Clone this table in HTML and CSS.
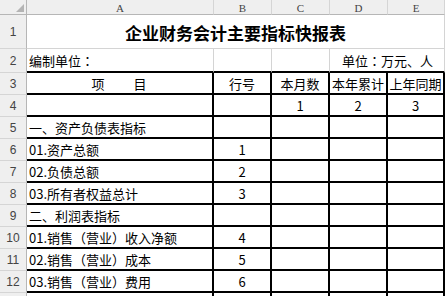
FILE: index.html
```html
<!DOCTYPE html>
<html lang="zh-CN">
<head>
<meta charset="utf-8">
<title>企业财务会计主要指标快报表</title>
<link rel="stylesheet" href="styles.css">
</head>
<body>
<div class="sheet">
  <div class="corner"><span class="tri"></span></div>
  <div class="ch">A</div>
  <div class="ch">B</div>
  <div class="ch">C</div>
  <div class="ch">D</div>
  <div class="ch">E</div>
  <div class="ch"></div>

  <div class="rh r1">1</div>
  <div class="cell title span5">企业财务会计主要指标快报表</div>
  <div class="cell"></div>

  <div class="rh">2</div>
  <div class="cell top">编制单位<span class="punc">：</span></div>
  <div class="cell top"></div>
  <div class="cell top"></div>
  <div class="cell top span2 unit">单位<span class="punc">：</span>万元、人</div>
  <div class="cell"></div>

  <div class="rh">3</div>
  <div class="cell bx ctr item">项　　目</div>
  <div class="cell bx ctr">行号</div>
  <div class="cell bx ctr">本月数</div>
  <div class="cell bx ctr">本年累计</div>
  <div class="cell bx ctr">上年同期</div>
  <div class="cell"></div>

  <div class="rh">4</div>
  <div class="cell bx"></div>
  <div class="cell bx"></div>
  <div class="cell bx ctr">1</div>
  <div class="cell bx ctr">2</div>
  <div class="cell bx ctr">3</div>
  <div class="cell"></div>

  <div class="rh">5</div>
  <div class="cell bx">一、资产负债表指标</div>
  <div class="cell bx"></div>
  <div class="cell bx"></div>
  <div class="cell bx"></div>
  <div class="cell bx"></div>
  <div class="cell"></div>

  <div class="rh">6</div>
  <div class="cell bx">01.资产总额</div>
  <div class="cell bx ctr">1</div>
  <div class="cell bx"></div>
  <div class="cell bx"></div>
  <div class="cell bx"></div>
  <div class="cell"></div>

  <div class="rh">7</div>
  <div class="cell bx">02.负债总额</div>
  <div class="cell bx ctr">2</div>
  <div class="cell bx"></div>
  <div class="cell bx"></div>
  <div class="cell bx"></div>
  <div class="cell"></div>

  <div class="rh">8</div>
  <div class="cell bx">03.所有者权益总计</div>
  <div class="cell bx ctr">3</div>
  <div class="cell bx"></div>
  <div class="cell bx"></div>
  <div class="cell bx"></div>
  <div class="cell"></div>

  <div class="rh">9</div>
  <div class="cell bx">二、利润表指标</div>
  <div class="cell bx"></div>
  <div class="cell bx"></div>
  <div class="cell bx"></div>
  <div class="cell bx"></div>
  <div class="cell"></div>

  <div class="rh">10</div>
  <div class="cell bx">01.销售（营业）收入净额</div>
  <div class="cell bx ctr">4</div>
  <div class="cell bx"></div>
  <div class="cell bx"></div>
  <div class="cell bx"></div>
  <div class="cell"></div>

  <div class="rh">11</div>
  <div class="cell bx">02.销售（营业）成本</div>
  <div class="cell bx ctr">5</div>
  <div class="cell bx"></div>
  <div class="cell bx"></div>
  <div class="cell bx"></div>
  <div class="cell"></div>

  <div class="rh">12</div>
  <div class="cell bx">03.销售（营业）费用</div>
  <div class="cell bx ctr">6</div>
  <div class="cell bx"></div>
  <div class="cell bx"></div>
  <div class="cell bx"></div>
  <div class="cell"></div>

  <div class="rh"></div>
  <div class="cell bx"></div>
  <div class="cell bx"></div>
  <div class="cell bx"></div>
  <div class="cell bx"></div>
  <div class="cell bx"></div>
  <div class="cell"></div>
</div>
</body>
</html>
```

FILE: styles.css
```css
html, body {
  margin: 0;
  padding: 0;
  background: #ffffff;
  overflow: hidden;
}

.sheet {
  display: grid;
  grid-template-columns: 27px 187px 58px 58px 58px 57px 60px;
  grid-template-rows: 15px 34px 24px repeat(11, 22px);
  width: 505px;
}

.corner,
.ch,
.rh {
  box-sizing: border-box;
  background: #efefef;
  color: #444444;
}

.corner {
  border-right: 1px solid #b6b6b6;
  border-bottom: 1px solid #b6b6b6;
  display: flex;
  justify-content: flex-end;
  align-items: flex-end;
  padding: 0 2px 2px 0;
}

.tri {
  width: 0;
  height: 0;
  border-style: solid;
  border-width: 0 0 8px 8px;
  border-color: transparent transparent #b4b4b4 transparent;
}

.ch {
  border-right: 1px solid #d5d5d5;
  border-bottom: 1px solid #b6b6b6;
  font-family: "Liberation Serif", "DejaVu Serif", serif;
  font-size: 11px;
  display: flex;
  justify-content: center;
  align-items: center;
  padding-top: 1px;
}

.rh {
  border-right: 1px solid #b6b6b6;
  border-bottom: 1px solid #d5d5d5;
  font-family: "Liberation Sans", Arial, sans-serif;
  font-size: 12px;
  display: flex;
  justify-content: center;
  align-items: center;
  padding-top: 1px;
}

.cell {
  box-sizing: border-box;
  border-right: 1px solid #d4d4d4;
  border-bottom: 1px solid #d4d4d4;
  font-family: "Noto Sans CJK SC", "Noto Sans", sans-serif;
  font-size: 13px;
  color: #000000;
  display: flex;
  align-items: center;
  padding: 1px 2px 0 2px;
  white-space: nowrap;
}

.punc {
  font-family: "Noto Sans CJK TC", "Noto Sans CJK SC", sans-serif;
}

.cell.top {
  border-bottom: 2px solid #000000;
}

.cell.bx {
  border-right: 2px solid #000000;
  border-bottom: 2px solid #000000;
}

.ctr {
  justify-content: center;
}

.span5 {
  grid-column: span 5;
}

.span2 {
  grid-column: span 2;
}

.title {
  justify-content: center;
  font-size: 17px;
  font-weight: bold;
}

.unit {
  justify-content: flex-end;
  padding-right: 11px;
}

.item {
  letter-spacing: 1px;
}
```
